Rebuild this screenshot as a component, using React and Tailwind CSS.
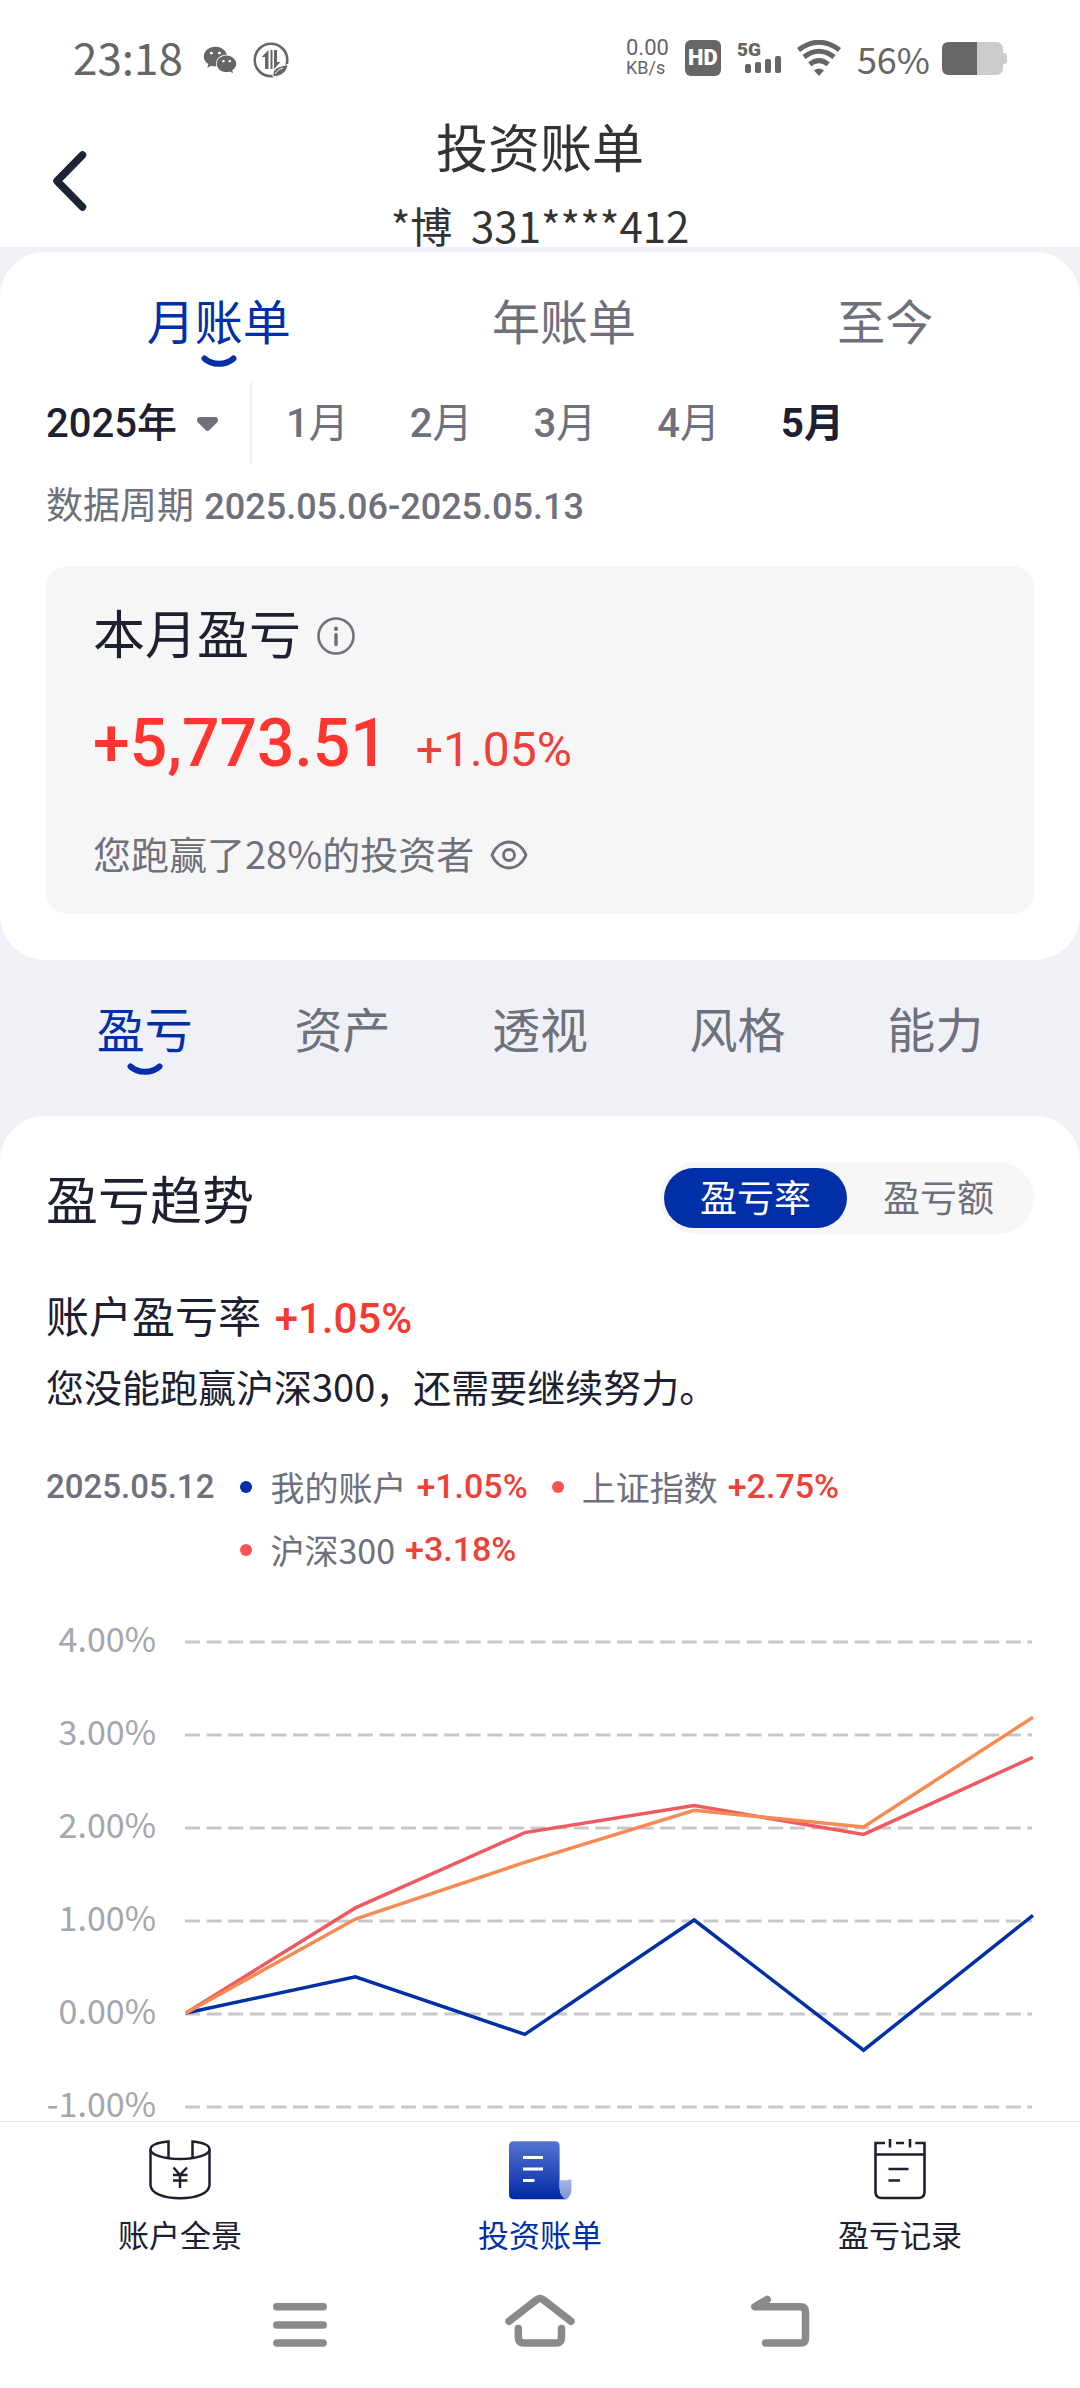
import React, { useState } from "react";
import { FaWeixin } from "react-icons/fa";

const MONTHS = [1, 2, 3, 4, 5];
const PERIOD_TABS = ["月账单", "年账单", "至今"];
const SECTION_TABS = ["盈亏", "资产", "透视", "风格", "能力"];
const AXIS = ["4.00%", "3.00%", "2.00%", "1.00%", "0.00%", "-1.00%"];

const LEGEND = [
  { name: "我的账户", value: "+1.05%", dot: "bg-[#002fa7]" },
  { name: "上证指数", value: "+2.75%", dot: "bg-[#ff5055]" },
  { name: "沪深300", value: "+3.18%", dot: "bg-[#ff5055]" },
];

const SERIES = [
  { color: "#0030a5", values: [0, 0.39, -0.23, 1.0, -0.4, 1.05] },
  { color: "#ee5a60", values: [0, 1.13, 1.94, 2.23, 1.92, 2.75] },
  { color: "#f58b53", values: [0, 1.01, 1.62, 2.18, 2.0, 3.18] },
];

const NUM = "font-['Roboto','Noto_Sans_CJK_SC',sans-serif]";

const chartX = (i) => 1 + i * 169.4;
const chartY = (v) => 391 - v * 93;

function Smile({ visible }) {
  return (
    <svg viewBox="0 0 36 12" className={visible ? "h-3 w-9" : "invisible h-3 w-9"} fill="none" aria-hidden="true">
      <path d="M3.500 3.500 C11 10.500 25 10.500 32.500 3.500" stroke="#002fa7" strokeWidth="6" strokeLinecap="round" />
    </svg>
  );
}

function StatusBar() {
  return (
    <div className="flex h-28 items-center justify-between pl-[73px] pr-[73px] text-[#666]">
      <div className="flex items-center">
        <span className="text-[44px] leading-none">23:18</span>
        <FaWeixin className="ml-5 mt-2 size-[34px]" aria-hidden="true" />
        <svg viewBox="0 0 36 36" className="ml-4 mt-2 size-9" fill="none" aria-hidden="true">
          <circle cx="18" cy="18" r="16.3" stroke="currentColor" strokeWidth="2.6" />
          <path d="M15.5 8 V27 H12 V15 H8.5 Z" fill="currentColor" />
          <path d="M17.5 8 H19.500 V27 H17.5 Z" fill="currentColor" />
          <path d="M21 8 H24 V20 H27.500 L21 27 Z" fill="currentColor" />
          <path d="M20 34.500 C19 27 24 24.500 35 22.500 C34.500 29 29 35 20 34.500 Z" fill="currentColor" stroke="#fff" strokeWidth="1" />
          <path d="M22 32 C24 28.500 27 27 30 26" stroke="#fff" strokeWidth="1" />
        </svg>
      </div>
      <div className="mt-1 flex items-center gap-4">
        <div className={`${NUM} text-[22px] leading-[20px]`}>
          <div>0.00</div>
          <div className="text-[18px]">KB/s</div>
        </div>
        <div className={`${NUM} flex size-9 items-center justify-center rounded-md bg-[#666] text-[22px] font-black leading-none text-white`}>
          HD
        </div>
        <div className="relative h-9 w-11">
          <span className={`${NUM} absolute left-0 top-0 text-[19px] font-black leading-none`}>5G</span>
          <svg viewBox="0 0 44 36" className="size-full" fill="currentColor" aria-hidden="true">
            <rect x="8" y="24" width="6" height="9" rx="2" />
            <rect x="18" y="22" width="6" height="11" rx="2" />
            <rect x="28" y="19" width="6" height="14" rx="2" />
            <rect x="38" y="16" width="6" height="17" rx="2" />
          </svg>
        </div>
        <svg viewBox="0 0 44 36" className="h-9 w-11" fill="none" stroke="currentColor" strokeWidth="5" aria-hidden="true">
          <path d="M1.500 10 Q22 -5.500 42.500 10" />
          <path d="M7 17 Q22 5.500 37 17" />
          <path d="M12.800 24.300 Q22 17 31.200 24.300" />
          <path d="M17 30.500 Q22 26.500 27 30.500 L22 36 Z" fill="currentColor" stroke="none" />
        </svg>
        <span className="text-[36px] leading-none">56%</span>
        <svg viewBox="0 0 65 33" className="-ml-1 h-[33px] w-[65px]" aria-hidden="true">
          <path d="M7 0 H54 Q61 0 61 8 V11 H62 Q65 11 65 14 V19 Q65 22 62 22 H61 V25 Q61 33 54 33 H7 Q0 33 0 26 V7 Q0 0 7 0 Z" fill="#ccc" />
          <path d="M7 0 H35 V33 H7 Q0 33 0 26 V7 Q0 0 7 0 Z" fill="#666" />
        </svg>
      </div>
    </div>
  );
}

function Header() {
  return (
    <header className="bg-white">
      <StatusBar />
      <div className="grid grid-cols-[136px_1fr_136px] items-center pb-px pt-1">
        <button type="button" aria-label="返回" className="pl-[50px]">
          <svg viewBox="0 0 40 64" className="h-16 w-10" fill="none" aria-hidden="true">
            <path d="M32.500 6 L7 32 L32.500 58" stroke="#1d2433" strokeWidth="7.500" strokeLinecap="round" strokeLinejoin="round" />
          </svg>
        </button>
        <div className="text-center text-[#333]">
          <h1 className="text-[52px] leading-[60px]">投资账单</h1>
          <p className="mt-7 text-[42px] leading-[42px]">*博&nbsp; 331****412</p>
        </div>
      </div>
    </header>
  );
}

function SummaryCard() {
  const [tab, setTab] = useState(0);
  const [month, setMonth] = useState(5);
  return (
    <section className="mt-[5px] rounded-[45px] bg-white px-[46px] pb-[46px] pt-[43px]">
      <div className="flex justify-around text-[48px] leading-none">
        {PERIOD_TABS.map((t, i) => (
          <button
            key={t}
            type="button"
            onClick={() => setTab(i)}
            className={`flex flex-col items-center gap-3 ${tab === i ? "text-[#002fa7]" : "text-[#6e707c]"}`}
          >
            {t}
            <Smile visible={tab === i} />
          </button>
        ))}
      </div>

      <div className={`${NUM} mt-[15px] flex h-[83px] items-center text-[40px]`}>
        <label className="flex h-full items-center border-r-2 border-[#f1f1f3] pr-8">
          <select aria-label="年份" defaultValue="2025" className="w-[134px] appearance-none bg-transparent font-medium text-[#1c2030] outline-none">
            <option value="2025">2025年</option>
            <option value="2024">2024年</option>
          </select>
          <svg viewBox="0 0 21 14" className="ml-[17px] h-3.5 w-[21px]" aria-hidden="true">
            <path d="M3 0 H18 Q21 0 21 3 Q21 5 19 6.500 L12.500 13 Q10.500 15 8.500 13 L2 6.500 Q0 5 0 3 Q0 0 3 0 Z" fill="#6e707c" />
          </svg>
        </label>
        <div className="ml-[34px] flex gap-[61px]">
          {MONTHS.map((m) => (
            <button
              key={m}
              type="button"
              onClick={() => setMonth(m)}
              className={month === m ? "font-bold text-[#1c2030]" : "text-[#6e707c]"}
            >
              <span className={month === m ? "font-bold" : "font-medium"}>{m}</span>月
            </button>
          ))}
        </div>
      </div>

      <p className="mt-[14px] text-[37px] leading-[48px] text-[#6e707c]">
        数据周期 <span className={`${NUM} ml-0.5 text-[36px] font-medium leading-none`}>2025.05.06-2025.05.13</span>
      </p>

      <div className="mt-[39px] rounded-[22px] bg-[#f6f6f6] px-[47px] pb-[37px] pt-9">
        <div className="flex items-center gap-4">
          <h2 className="text-[52px] leading-[60px] text-[#1c2030]">本月盈亏</h2>
          <svg viewBox="0 0 38 38" className="mt-2 size-[38px]" fill="none" stroke="#6e707c" aria-hidden="true">
            <circle cx="19" cy="19" r="17.500" strokeWidth="2.600" />
            <path d="M19 17.500 V27.500" strokeWidth="3.400" strokeLinecap="round" />
            <path d="M19 11.500 V12" strokeWidth="4" strokeLinecap="round" />
          </svg>
        </div>
        <div className={`${NUM} mt-[42px] flex items-baseline gap-7 text-[#ff352f]`}>
          <span className="text-[66px] font-medium leading-[80px]">+5,773.51</span>
          <span className="text-[48px] leading-none text-[#ee3f38]">+1.05%</span>
        </div>
        <div className="mt-[45px] flex items-center gap-4 text-[#6e707c]">
          <p className="text-[38px] leading-[48px]">您跑赢了28%的投资者</p>
          <svg viewBox="0 0 38 30" className="mt-1 h-[30px] w-[38px]" fill="none" stroke="currentColor" strokeWidth="2.800" aria-hidden="true">
            <path d="M2 15 C5 7 12 2 19 2 S33 7 36 15 C33 23 26 28 19 28 S5 23 2 15 Z" />
            <circle cx="19" cy="15" r="5.500" />
          </svg>
        </div>
      </div>
    </section>
  );
}

function SectionTabs() {
  const [tab, setTab] = useState(0);
  return (
    <nav className="grid grid-cols-5 px-[46px] pb-[41px] pt-[43px] text-[48px] leading-none">
      {SECTION_TABS.map((t, i) => (
        <button
          key={t}
          type="button"
          onClick={() => setTab(i)}
          className={`flex flex-col items-center gap-3 ${tab === i ? "text-[#002fa7]" : "text-[#6e707c]"}`}
        >
          {t}
          <Smile visible={tab === i} />
        </button>
      ))}
    </nav>
  );
}

function TrendChart() {
  return (
    <div className="mt-[41px] flex h-[497px]">
      <div className="mr-[29px] flex w-[110px] flex-col items-end justify-between whitespace-nowrap text-[34px] leading-[32px] text-[#a5a6ae]">
        {AXIS.map((a) => (
          <span key={a}>{a}</span>
        ))}
      </div>
      <svg viewBox="0 0 849 497" preserveAspectRatio="none" className="h-full min-w-0 flex-1" fill="none" role="img" aria-label="盈亏趋势">
        {AXIS.map((a, i) => (
          <line key={a} x1="0" x2="847" y1={20 + i * 93} y2={20 + i * 93} stroke="#c8c8c8" strokeWidth="3" strokeDasharray="15 6.6" />
        ))}
        {SERIES.map((s) => (
          <polyline
            key={s.color}
            points={s.values.map((v, i) => `${chartX(i)},${chartY(v)}`).join(" ")}
            stroke={s.color}
            strokeWidth="3.500"
          />
        ))}
      </svg>
    </div>
  );
}

function TrendCard() {
  const [mode, setMode] = useState(0);
  return (
    <section className="flex-1 rounded-t-[45px] bg-white px-[46px] pb-0.5 pt-[46px]">
      <div className="flex h-[72px] items-center justify-between">
        <h2 className="text-[52px] leading-[60px] text-[#1c2030]">盈亏趋势</h2>
        <div className="flex rounded-full bg-[#f7f7f7] px-1 py-1.5">
          {["盈亏率", "盈亏额"].map((t, i) => (
            <button
              key={t}
              type="button"
              onClick={() => setMode(i)}
              className={`h-[60px] rounded-full px-9 pb-1 text-[37px] leading-none ${mode === i ? "bg-[#002fa7] text-white" : "text-[#6e707c]"}`}
            >
              {t}
            </button>
          ))}
        </div>
      </div>

      <p className="mt-[50px] text-[43px] leading-[60px] text-[#1c2030]">
        账户盈亏率 <span className={`${NUM} ml-1 text-[42px] font-medium leading-none text-[#f53a34]`}>+1.05%</span>
      </p>
      <p className="mt-[18px] text-[38px] leading-[48px] text-[#1c2030]">您没能跑赢沪深300，还需要继续努力。</p>

      <div className="mt-[45px] flex text-[34px] leading-[63px] text-[#6e707c]">
        <span className={`${NUM} mr-[26px] text-[33px] font-medium`}>2025.05.12</span>
        <ul className="flex flex-1 flex-wrap gap-x-6 pr-32">
          {LEGEND.map((l) => (
            <li key={l.name} className="flex items-center">
              <span className={`mr-[18px] size-3 rounded-full ${l.dot}`} />
              <span>{l.name}</span>
              <span className={`${NUM} ml-2.5 font-medium text-[#ee3f38]`}>{l.value}</span>
            </li>
          ))}
        </ul>
      </div>

      <TrendChart />
    </section>
  );
}

function PanoramaIcon() {
  return (
    <svg viewBox="0 0 64 64" className="size-16" fill="none" stroke="#1c2030" strokeWidth="2.500" aria-hidden="true">
      <path d="M20.500 18.500 V2.500 C9 3.500 2.500 6.500 2.500 10.500 C2.500 15.500 15.500 20 32 20 S61.500 15.500 61.500 10.500 C61.500 6.500 55 3.500 44.500 2.500 V18.500" />
      <path d="M2.500 10.500 V46 C2.500 54 15.500 59.300 32 59.300 S61.500 54 61.500 46 V10.500" />
      <path d="M25.500 28.500 L32 36 L39 28.500 M32 36 V49 M25 36 H39.500 M25 41.500 H39.500" />
    </svg>
  );
}

function BillIcon() {
  return (
    <svg viewBox="0 0 64 64" className="size-16" fill="none" aria-hidden="true">
      <defs>
        <linearGradient id="bill" x1="0" y1="0" x2="0" y2="1">
          <stop offset="0" stopColor="#5474d2" />
          <stop offset="1" stopColor="#0029a5" />
        </linearGradient>
        <linearGradient id="curl" x1="0" y1="0" x2="0" y2="1">
          <stop offset="0" stopColor="#aab8e6" />
          <stop offset="1" stopColor="#8093d2" />
        </linearGradient>
      </defs>
      <path d="M6 2.300 H47 Q51.600 2.300 51.600 7 V48 Q51.600 58 59.500 60.300 H6 Q1 60.300 1 55.500 V7 Q1 2.300 6 2.300 Z" fill="url(#bill)" />
      <path d="M51.600 41 Q58 42 63.500 40.300 V49 Q63.500 58 58 60 Q51.600 58 51.600 48 Z" fill="url(#curl)" />
      <path d="M15 18.500 H35 M15 30 H35 M15 41.500 H26.500" stroke="#fff" strokeWidth="3" />
    </svg>
  );
}

function RecordIcon() {
  return (
    <svg viewBox="0 0 64 64" className="size-16" fill="none" stroke="#1c2030" strokeWidth="2.600" aria-hidden="true">
      <path d="M17 4 H7.500 V53 Q7.500 59 13.500 59 H50.500 Q56.500 59 56.500 53 V4 H47.300" />
      <path d="M28 4 H36 M7.500 15.500 H56.500 M20.500 30 H40.500 M20.500 41.500 H32" />
      <path d="M22 0 V8.500 M42 0 V8.500" />
    </svg>
  );
}

function BottomNav() {
  const items = [
    { label: "账户全景", Icon: PanoramaIcon, color: "text-[#1c2030]" },
    { label: "投资账单", Icon: BillIcon, color: "text-[#002fa7]" },
    { label: "盈亏记录", Icon: RecordIcon, color: "text-[#1c2030]" },
  ];
  return (
    <footer className="bg-white">
      <nav className="grid grid-cols-3 border-t border-[#e8e8ea] pt-[17px]">
        {items.map(({ label, Icon, color }) => (
          <a key={label} href="#" className={`flex flex-col items-center gap-[15px] text-[31px] leading-[32px] ${color}`}>
            <Icon />
            {label}
          </a>
        ))}
      </nav>
      <div className="flex justify-center gap-[168px] pb-[38px] pt-11">
        <button type="button" aria-label="最近任务">
          <svg viewBox="0 0 72 56" className="h-14 w-[72px]" fill="none" stroke="#8a8a8a" strokeWidth="7.500" strokeLinecap="round" aria-hidden="true">
            <path d="M12.800 12.700 H59.200 M12.800 31 H59.200 M12.800 49 H59.200" />
          </svg>
        </button>
        <button type="button" aria-label="主屏幕">
          <svg viewBox="0 0 72 56" className="h-14 w-[72px]" fill="none" stroke="#8a8a8a" strokeWidth="7.500" strokeLinecap="round" strokeLinejoin="round" aria-hidden="true">
            <path d="M5 27.300 L33 5.500 Q36 3.500 39 5.500 L67 27.300" />
            <path d="M14.300 34.500 V43 Q14.300 49 20 49 H52 Q57.500 49 57.500 43 V34.500" />
          </svg>
        </button>
        <button type="button" aria-label="后退">
          <svg viewBox="0 0 72 56" className="h-14 w-[72px]" fill="none" stroke="#8a8a8a" strokeWidth="7.500" strokeLinecap="round" strokeLinejoin="round" aria-hidden="true">
            <path d="M23.300 5.500 L10.800 12.700 H56 Q61.500 12.700 61.500 18 V44 Q61.500 49 56 49 H21.500" />
          </svg>
        </button>
      </div>
    </footer>
  );
}

export default function App() {
  return (
    <div className="flex min-h-screen flex-col bg-[#f0f1f6] font-['Noto_Sans_CJK_SC',sans-serif]">
      <Header />
      <main className="flex flex-1 flex-col">
        <SummaryCard />
        <SectionTabs />
        <TrendCard />
      </main>
      <BottomNav />
    </div>
  );
}
